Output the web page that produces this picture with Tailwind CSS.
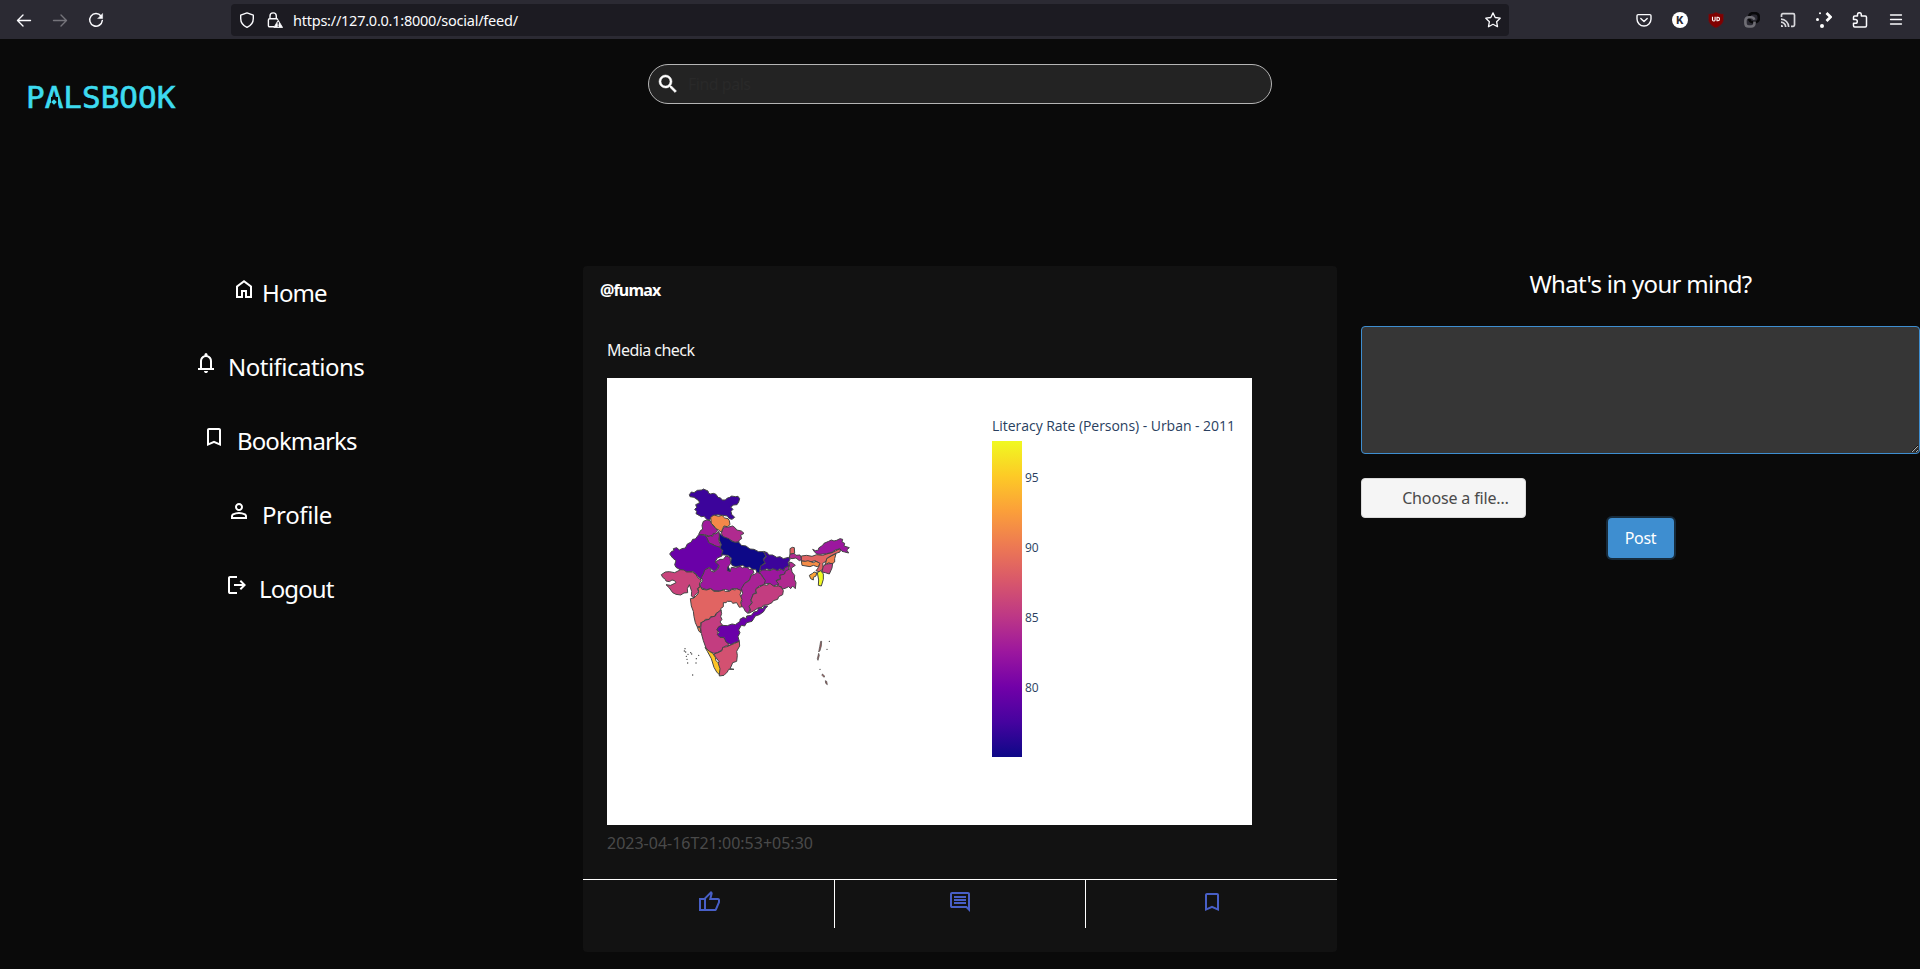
<!DOCTYPE html>
<html lang="en">
<head>
<meta charset="utf-8">
<title>Palsbook</title>
<script src="https://cdn.jsdelivr.net/npm/@tailwindcss/browser@4"></script>
</head>
<body class="h-[969px] w-[1920px] overflow-hidden bg-[#0a0a0a] font-['Noto_Sans',sans-serif] text-white">

<!-- Browser toolbar -->
<nav class="flex h-[39px] items-center bg-[#2b2a33] pl-4 pr-4 text-[#fbfbfe]">
  <div class="flex w-[215px] gap-5">
    <svg class="size-4" viewBox="0 0 16 16" fill="none" stroke="currentColor" stroke-width="1.4" stroke-linecap="round" stroke-linejoin="round"><path d="M14.5 8.5h-13M7 3 1.5 8.5 7 14"/></svg>
    <svg class="size-4 text-[#75747b]" viewBox="0 0 16 16" fill="none" stroke="currentColor" stroke-width="1.4" stroke-linecap="round" stroke-linejoin="round"><path d="M1.5 8.5h13M9 3l5.500 5.500L9 14"/></svg>
    <svg class="size-4" viewBox="0 0 16 16" fill="none" stroke="currentColor" stroke-width="1.500" stroke-linecap="round"><path d="M13 4A6.300 6.300 0 1 0 14.300 8.500"/><path d="M14.600 1.800v4.700H10z" fill="currentColor" stroke-width=".5"/></svg>
  </div>
  <div class="flex h-8 w-[1278px] items-center rounded bg-[#1c1b22] pl-2 pr-2">
    <svg class="size-4" viewBox="0 0 16 16" fill="none" stroke="currentColor" stroke-width="1.400" stroke-linejoin="round"><path d="M8 .9 14.300 3.200v3.300c0 4-2.500 7.200-6.300 8.900C4.200 13.700 1.700 10.500 1.700 6.500V3.200z"/></svg>
    <svg class="ml-3 size-4" viewBox="0 0 16 16" fill="none" stroke="currentColor" stroke-width="1.400"><path d="M7 14.800H2.600c-.7 0-1.200-.5-1.200-1.200V8c0-.7.5-1.200 1.200-1.200h7c.6 0 1.100.4 1.200 1M3 6.600V4a3.100 3.100 0 0 1 6.300 0v2.600"/><path d="M11.200 8.200 15.600 15.500H6.900z" fill="currentColor" stroke-width=".8" stroke-linejoin="round"/><path d="M11.200 10v2.700m0 .9v1.100" stroke="#1c1b22" stroke-width="1.200"/></svg>
    <span class="ml-[10px] flex-1 text-[14.500px] leading-5 tracking-[-0.240px]">https://127.0.0.1:8000/social/feed/</span>
    <svg class="size-4" viewBox="0 0 16 16" fill="none" stroke="currentColor" stroke-width="1.300" stroke-linejoin="round"><path d="m8 .9 2.200 4.600 5 .7-3.600 3.500.9 5L8 12.300l-4.500 2.400.9-5L.8 6.200l5-.7z"/></svg>
  </div>
  <div class="ml-auto flex gap-5">
    <svg class="size-4" viewBox="0 0 16 16" fill="none" stroke="currentColor" stroke-width="1.400" stroke-linecap="round" stroke-linejoin="round"><path d="M2.200 2.600h11.600c.7 0 1.200.5 1.200 1.200V7a7 7 0 0 1-14 0V3.800c0-.7.5-1.200 1.200-1.200z"/><path d="M4.800 6.500 8 9.600l3.200-3.100"/></svg>
    <svg class="size-4" viewBox="0 0 16 16"><circle cx="8" cy="8" r="8" fill="#fff"/><text x="8" y="11.500" text-anchor="middle" font-family="Inter,sans-serif" font-weight="800" font-size="10" fill="#2b2a33">K</text></svg>
    <svg class="size-4" viewBox="0 0 16 16"><path d="M8 0c2 1.500 4.500 2 7.500 2v5.500c0 4-3.500 6.500-7.500 8.500C4 14 .5 11.500.5 7.500V2C3.500 2 6 1.500 8 0z" fill="#800000" stroke="#4b2028" stroke-width=".6"/><path d="M4.500 4.800v3c0 .8.400 1.200 1.100 1.200h.6c.5 0 .9-.4.9-1.200v-3M9 5.300h1c.9 0 1.500.7 1.500 1.600S10.900 8.700 10 8.700H9z" fill="none" stroke="#fff" stroke-width="1.100"/></svg>
    <svg class="size-4" viewBox="0 0 16 16" fill="none" stroke-width="2.600"><rect x="5.200" y="1.200" width="9.600" height="9" rx="3.500" stroke="#08080a"/><path d="M10.500 9.500v1.700c0 2-1.300 3.300-3.300 3.300H4.700c-2 0-3.300-1.300-3.300-3.300V8.500c0-2 1.300-3.300 3.300-3.300H7c1.500 0 3 1 3.300 2.500" stroke="#6f6e75"/></svg>
    <svg class="size-4" viewBox="0 0 16 16" fill="none" stroke="#d8d8dc" stroke-width="1.700"><path d="M1.500 5V3c0-.8.500-1.300 1.300-1.300h10.400c.8 0 1.300.5 1.300 1.300v10c0 .8-.5 1.300-1.300 1.300H11M1 7.200c4.200 0 7.700 3.500 7.700 7.800M1 10.200c2.600 0 4.700 2.100 4.700 4.800"/><path d="M1 12.800A2.200 2.200 0 0 1 3.200 15H1z" fill="#d8d8dc" stroke="none"/></svg>
    <svg class="size-4" viewBox="0 0 16 16" fill="#fff"><circle cx="4" cy="1.300" r="1"/><circle cx="1.500" cy="7.500" r="1.500"/><circle cx="6" cy="14" r="2"/><path d="m10.500 1 4 4-4 4" fill="none" stroke="#fff" stroke-width="2.700"/></svg>
    <svg class="size-4" viewBox="0 0 16 16" fill="none" stroke="currentColor" stroke-width="1.500" stroke-linejoin="round"><path d="M5.500 4V2.600a1.900 1.900 0 0 1 3.800 0V4h4c.7 0 1.200.5 1.200 1.200v8.600c0 .7-.5 1.200-1.200 1.200H2.700c-.7 0-1.200-.5-1.200-1.200v-2.600h2a1.800 1.800 0 0 0 0-3.600h-2V5.200C1.500 4.500 2 4 2.700 4z"/></svg>
    <svg class="size-4" viewBox="0 0 16 16" stroke="currentColor" stroke-width="1.300" stroke-linecap="round"><path d="M2.500 3h11M2.500 7.500h11M2.500 12h11"/></svg>
  </div>
</nav>

<header class="flex h-[227px]">
  <div class="w-[648px] pl-[26px] pt-[40px] font-['DejaVu_Sans_Mono',monospace] text-[31px] leading-[36px] text-[#3ddbf0]">
    <div class="relative w-max [-webkit-text-stroke:0.600px_#3ddbf0]">PALSBOOK
      <!-- stencil cut in the A -->
      <span class="absolute top-[18px] left-[24.500px] h-[8px] w-[7px] bg-[#0a0a0a]"></span>
      <span class="absolute top-[21px] left-[26px] size-[4px] rotate-45 bg-[#3ddbf0]"></span>
    </div>
  </div>
  <div class="mt-[25px] flex h-10 w-[624px] items-center rounded-[20px] border border-[#b5b5b5] bg-[#232323] pl-[7px]">
    <svg class="size-6" viewBox="0 0 24 24" fill="#fff" stroke="#fff" stroke-width=".5"><path d="M15.500 14h-.79l-.28-.27A6.470 6.470 0 0 0 16 9.500 6.500 6.500 0 1 0 9.500 16c1.610 0 3.090-.59 4.230-1.570l.27.28v.79l5 4.990L20.490 19zm-6 0C7.010 14 5 11.990 5 9.500S7.010 5 9.500 5 14 7.010 14 9.500 11.990 14 9.500 14"/></svg>
    <span class="ml-[8px] text-base tracking-[-0.500px] text-[#292929]">Find pals</span>
  </div>
</header>

<main class="flex">
  <!-- Navigation -->
  <ul class="w-[583px] text-2xl leading-9">
    <li class="flex h-[74px] pl-[232px] pt-[9px]">
      <svg class="mt-[2px] size-6" viewBox="0 0 24 24" fill="#fff"><path d="M6 19h3v-6h6v6h3v-9l-6-4.500L6 10zm-2 2V9l8-6 8 6v12h-7v-6h-2v6z"/></svg><span class="ml-[6px] tracking-[-0.900px]">Home</span></li>
    <li class="flex h-[74px] pl-[194px] pt-[9px]">
      <svg class="mt-[2px] size-6" viewBox="0 0 24 24" fill="#fff"><path d="M4 19v-2h2v-7q0-2.075 1.250-3.688T10.500 4.200v-.7q0-.625.438-1.062T12 2t1.063.438T13.500 3.500v.7q2 .5 3.250 2.113T18 10v7h2v2zm8 3q-.825 0-1.412-.587T10 20h4q0 .825-.587 1.413T12 22m-4-5h8v-7q0-1.650-1.175-2.825T12 6 9.175 7.175 8 10z"/></svg><span class="ml-[10px] tracking-[-0.500px]">Notifications</span></li>
    <li class="flex h-[74px] pl-[202px] pt-[9px]">
      <svg class="mt-[2px] size-6" viewBox="0 0 24 24" fill="#fff"><path d="M5 21V5q0-.825.588-1.412T7 3h10q.825 0 1.413.588T19 5v16l-7-3zm2-3.050 5-2.150 5 2.150V5H7z"/></svg><span class="ml-[11px] tracking-[-0.900px]">Bookmarks</span></li>
    <li class="flex h-[74px] pl-[227px] pt-[9px]">
      <svg class="mt-[2px] size-6" viewBox="0 0 24 24" fill="#fff"><path d="M12 12q-1.650 0-2.825-1.175T8 8t1.175-2.825T12 4t2.825 1.175T16 8t-1.175 2.825T12 12m-8 8v-2.800q0-.85.438-1.562T5.600 14.550q1.550-.775 3.150-1.162T12 13t3.250.388 3.150 1.162q.725.375 1.163 1.088T20 17.200V20zm2-2h12v-.8q0-.275-.137-.5t-.363-.35q-1.350-.675-2.725-1.012T12 15t-2.775.338T6.500 16.350q-.225.125-.362.350T6 17.200zm6-8q.825 0 1.413-.587T14 8t-.587-1.412T12 6t-1.412.588T10 8t.588 1.413T12 10"/></svg><span class="ml-[11px] tracking-[-0.400px]">Profile</span></li>
    <li class="flex h-[74px] pl-[225px] pt-[9px]">
      <svg class="mt-[2px] size-6" viewBox="0 0 24 24" fill="#fff"><path d="M5 21q-.825 0-1.412-.587T3 19V5q0-.825.588-1.412T5 3h7v2H5v14h7v2zm11-4-1.375-1.450 2.550-2.550H9v-2h8.175l-2.550-2.550L16 7l5 5z"/></svg><span class="ml-[10px] tracking-[-0.900px]">Logout</span></li>
  </ul>

  <!-- Post -->
  <article class="h-[686px] w-[754px] rounded bg-[#121212]">
    <h2 class="pl-[17px] pt-3 text-base leading-6 font-bold tracking-[-0.850px]">@fumax</h2>
    <div class="h-[577px] pl-6 pt-9">
      <p class="text-base leading-6 tracking-[-0.550px] text-[#f5f5f5]">Media check</p>
      <svg class="mt-4 block h-[447px] w-[645px] bg-white" viewBox="0 0 645 447">
        <defs>
          <linearGradient id="scale" x1="0" y1="1" x2="0" y2="0">
            <stop offset="0" stop-color="#0d0887"/><stop offset=".111" stop-color="#46039f"/><stop offset=".222" stop-color="#7201a8"/><stop offset=".333" stop-color="#9c179e"/><stop offset=".444" stop-color="#bd3786"/><stop offset=".556" stop-color="#d8576b"/><stop offset=".667" stop-color="#ed7953"/><stop offset=".778" stop-color="#fb9f3a"/><stop offset=".889" stop-color="#fdca26"/><stop offset="1" stop-color="#f0f921"/>
          </linearGradient>
        </defs>
        <g transform="translate(33 92) scale(.33333)" stroke="#444" stroke-width="3" stroke-linejoin="round">
          <path fill="#3c049b" d="M148 74 154 66 162 68 172 61 186 60 190 57 204 63 206 70 212 72 220 70 228 73 234 82 242 84 246 90 256 90 262 84 270 82 274 78 286 80 294 79 299 86 296 96 291 104 281 105 272 111 279 118 273 124 275 133 284 142 276 148 268 146 262 138 248 136 232 134 216 138 208 151 200 148 192 139 184 140 168 131 170 124 164 118 170 112 167 104 178 99 177 93 168 86 162 82 150 80z"/>
          <path fill="#a01a9c" d="M190 154 200 150 210 152 216 164 226 174 233 182 225 191 210 199 194 194 176 193 182 181 188 178 186 166z"/>
          <path fill="#a01a9c" d="M196 196 204 200 212 197 218 199 220 190 228 192 237 184 238 200 236 212 242 224 238 232 228 230 222 224 208 220z"/>
          <path fill="#b02a8f" d="M248 178 254 170 262 172 278 168 286 174 290 180 304 183 312 190 302 196 305 206 298 210 296 216 284 217 268 208 250 202 244 190z"/>
          <path fill="#f48849" d="M212 142 222 135 236 139 246 136 254 144 264 146 268 152 270 164 262 170 252 168 248 176 244 187 236 180 228 176 222 168 214 160z"/>
          <path fill="#6a00a8" d="M176 194 194 196 202 206 206 218 222 226 240 232 248 244 246 258 232 264 225 276 237 284 232 296 222 304 208 292 198 298 197 308 188 314 184 327 174 320 168 312 158 304 140 306 122 300 108 292 104 284 108 272 98 264 89 252 95 244 102 242 100 236 110 233 118 240 126 236 136 234 142 222 154 216 158 208 166 207z"/>
          <path fill="#c8437b" d="M64 314 76 306 88 305 104 308 122 299 132 300 140 306 158 306 168 314 174 324 184 330 178 342 180 352 172 356 176 366 164 376 162 384 154 378 155 364 148 344 142 356 143 368 132 369 122 375 108 373 98 368 88 354 78 344 92 346 108 338 104 332 96 330 88 335 78 333 76 328 68 322z"/>
          <path fill="#9c179e" d="M194 300 208 293 214 304 222 306 234 297 238 287 226 276 240 268 250 268 258 258 270 262 271 272 274 278 266 288 262 298 270 306 274 292 288 294 300 289 308 294 318 290 328 298 338 298 342 308 332 316 330 328 314 340 308 352 304 362 290 356 276 356 268 362 256 358 238 363 222 362 212 356 200 359 182 353 180 344 188 332 184 322 190 312z"/>
          <path fill="#0d0887" d="M239 190 250 200 266 206 276 214 286 217 296 216 304 226 318 228 330 237 342 238 356 245 370 245 378 258 370 268 376 278 362 288 358 310 352 310 347 298 338 298 328 291 318 293 308 286 300 288 288 290 277 287 272 278 274 264 264 256 244 254 249 242 240 234 244 224 238 210zM264 290 262 302 271 304 267 294z"/>
          <path fill="#3c049b" d="M371 244 382 248 386 255 398 255 410 262 420 260 430 266 446 262 450 268 444 278 448 288 434 294 430 302 420 296 412 302 398 296 390 300 380 296 368 303 360 300 362 288 376 280 370 270 379 260z"/>
          <path fill="#9c179e" d="M358 306 368 300 380 300 390 302 402 297 412 302 424 298 432 302 434 294 446 288 446 300 436 306 432 314 418 316 422 326 410 330 418 342 400 348 388 340 374 342 368 336 374 328z"/>
          <path fill="#b02a8f" d="M447 276 456 278 466 286 454 294 456 306 464 316 463 328 468 338 466 356 458 348 452 356 446 350 438 354 426 358 424 350 410 352 416 342 408 332 422 328 420 316 434 312 436 304 450 296zM450 252 462 250 468 256 480 255 486 268 478 272 468 264 456 266 448 264z"/>
          <path fill="#e16462" d="M450 236 457 232 463 233 464 250 450 252z"/>
          <path fill="#a92395" d="M334 316 346 312 352 306 364 314 368 322 376 332 372 344 358 348 348 356 347 368 340 372 332 392 336 398 328 408 332 414 324 430 316 424 310 412 302 408 297 404 306 394 300 384 308 370 304 356 314 340 328 332z"/>
          <path fill="#c33d80" d="M372 344 380 346 390 340 402 349 416 348 424 352 430 362 428 374 416 380 413 388 400 392 396 398 384 404 370 406 366 412 354 414 342 422 326 430 332 420 327 410 337 398 333 390 340 372 350 370 347 360 352 354z"/>
          <path fill="#e16462" d="M174 354 182 350 186 358 200 360 212 356 222 364 238 364 250 360 256 364 268 364 276 358 286 360 290 356 304 362 300 374 306 388 302 398 306 410 298 412 290 398 278 400 274 394 262 394 258 398 250 398 250 410 242 416 244 424 228 430 224 440 212 440 208 448 196 448 190 456 182 458 184 468 172 471 166 458 162 440 160 424 154 408 151 386 162 384 174 372 176 364z"/>
          <path fill="#f48849" d="M172 472 180 472 183 488 177 484z"/>
          <path fill="#c33d80" d="M242 420 245 430 242 440 246 448 240 456 248 466 236 472 238 480 232 488 238 500 254 504 264 520 266 528 256 528 246 540 232 548 222 550 208 544 198 534 190 512 184 490 182 474 184 458 198 450 208 448 212 442 226 438 230 430z"/>
          <path fill="#6a00a8" d="M236 470 246 466 262 467 276 462 286 464 300 454 300 448 310 442 318 446 320 438 334 436 342 426 352 424 356 414 370 416 372 408 383 408 376 416 370 426 358 434 346 438 336 454 320 458 314 468 304 466 296 480 300 488 294 500 298 514 284 518 272 524 258 516 252 502 240 502 232 494 238 486 230 480z"/>
          <path fill="#d35171" d="M222 552 234 548 246 542 248 532 260 530 270 526 284 520 298 514 299 528 290 544 292 556 290 574 278 578 274 588 270 596 282 598 266 598 262 606 252 616 238 618 238 602 232 580 238 576 226 560z"/>
          <path fill="#fdc527" d="M195 532 208 544 218 550 226 562 228 572 234 578 240 596 238 614 230 606 222 592 214 566 202 544z"/>
          <path fill="#e16462" d="M484 258 500 256 516 259 530 254 548 256 560 252 576 248 592 240 602 236 600 246 588 250 572 258 562 264 558 274 548 280 550 294 540 306 528 302 536 292 538 280 526 272 510 276 484 273z"/>
          <path fill="#f58c46" d="M484 273 496 274 504 272 520 278 528 274 540 280 534 291 520 286 510 290 486 286z"/>
          <path fill="#9c179e" d="M518 238 526 242 536 240 536 234 548 226 552 220 566 214 574 210 582 213 590 211 600 206 608 208 606 216 614 220 612 228 628 233 620 240 626 249 614 246 606 244 600 236 586 240 576 247 560 251 540 253 530 252 524 246z"/>
          <path fill="#f0804e" d="M560 266 574 258 588 251 584 266 584 276 576 282 566 278 554 286 558 276z"/>
          <path fill="#c33d80" d="M550 288 560 282 578 280 576 294 568 312 556 308 546 306z"/>
          <path fill="#f0f921" d="M532 308 542 302 550 312 550 328 544 348 535 346 536 330z"/>
          <path fill="#fca338" d="M508 316 518 310 522 306 530 308 528 318 520 322 520 330 512 326z"/>
          <path fill="#a66" stroke-width="2" d="M542 514 545 514 544 528 540 542 536 546 539 530zM536 550 538 556 534 571 532 566zM556 632 560 634 562 644 557 640zM547 612 554 618 552 622 546 616z"/>
          <path fill="none" stroke-linecap="round" stroke-width="4" d="M135 536h.1M137 546h.1M133 543h.1M144 553h.1M152 548h.1M139 559h.1M155 552h.1M176 556h.1M169 566h.1M141 568h.1M143 579h.1M168 579h.1M158 615h.1M540 598h.1M568 514h.1M561 538h.1"/>
        </g>
        <rect x="385" y="63" width="30" height="316" fill="url(#scale)"/>
        <g fill="#2a3f5f" font-family="Open Sans, sans-serif" font-size="12">
          <text x="385" y="53" font-size="14" textLength="243">Literacy Rate (Persons) - Urban - 2011</text>
          <text x="418" y="104">95</text><text x="418" y="174">90</text><text x="418" y="244">85</text><text x="418" y="314">80</text>
        </g>
      </svg>
      <time class="mt-1.5 block text-base leading-6 text-[#4a4a4a]">2023-04-16T21:00:53+05:30</time>
    </div>
    <div class="grid h-[49px] grid-cols-[252px_251px_251px] border-t border-white">
      <div class="flex items-center justify-center border-r border-white pb-1">
        <svg class="size-6" viewBox="0 0 24 24" fill="#485fc7"><path d="M18 21H7V8l7-7 1.250 1.250q.175.175.288.475t.112.575v.35L14.550 8H21q.8 0 1.400.6T23 10v2q0 .175-.05.375t-.1.375l-3 7.050q-.225.500-.75.850T18 21m-9-2h9l3-7v-2h-9l1.350-5.500L9 8.850zM9 8.850V19zM7 8v2H4v9h3v2H2V8z"/></svg>
      </div>
      <div class="flex items-center justify-center border-r border-white pb-1">
        <svg class="size-6" viewBox="0 0 24 24" fill="#485fc7"><path d="M6 14h12v-2H6zm0-3h12V9H6zm0-3h12V6H6zm16 14-4-4H4q-.825 0-1.412-.587T2 16V4q0-.825.588-1.412T4 2h16q.825 0 1.413.588T22 4zM4 16h14.850L20 17.125V4H4z"/></svg>
      </div>
      <div class="flex items-center justify-center pb-1">
        <svg class="size-6" viewBox="0 0 24 24" fill="#485fc7"><path d="M5 21V5q0-.825.588-1.412T7 3h10q.825 0 1.413.588T19 5v16l-7-3zm2-3.050 5-2.150 5 2.150V5H7z"/></svg>
      </div>
    </div>
  </article>

  <!-- New post form -->
  <form class="ml-6 flex w-[559px] flex-col">
    <h1 class="text-center text-2xl leading-9 tracking-[-0.680px]">What's in your mind?</h1>
    <textarea class="mt-6 block h-32 w-full rounded border border-[#3e8ed0] bg-[#363636]"></textarea>
    <button type="button" class="mt-6 h-10 w-[165px] rounded border border-[#dbdbdb] bg-[#f5f5f5] pl-[24px] text-base leading-6 tracking-[-0.150px] text-[#4a4a4a]">Choose a file…</button>
    <button type="button" class="mx-auto h-10 w-[66px] rounded bg-[#3e8ed0] text-base leading-6 tracking-[-0.300px] shadow-[0_0_0_2px_rgba(62,142,208,0.25)]">Post</button>
  </form>
</main>
</body>
</html>
